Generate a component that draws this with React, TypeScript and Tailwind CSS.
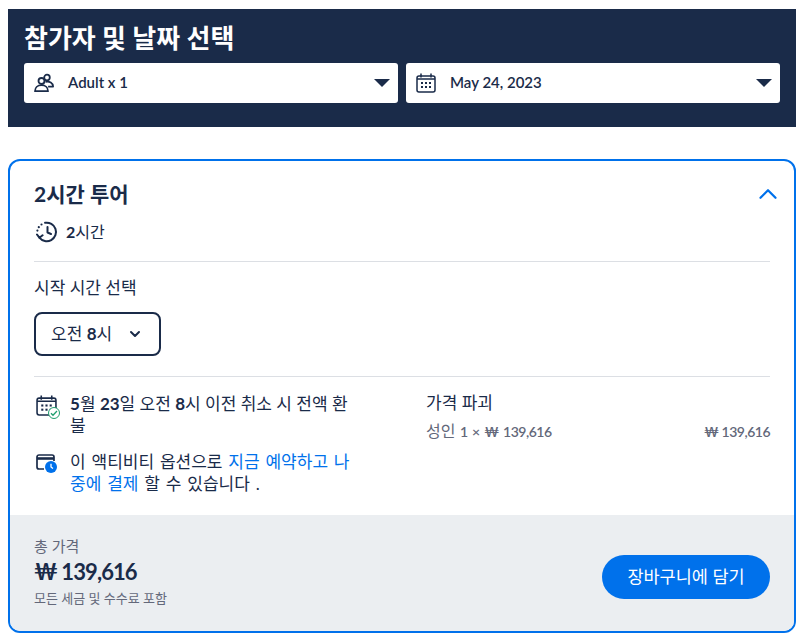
import { ChevronDown, ChevronUp } from "lucide-react";

const fontStack = "font-['Lato','Noto_Sans_CJK_KR',sans-serif]";

function PeopleIcon() {
  return (
    <svg width="20" height="20" viewBox="0 0 20 20" fill="none" stroke="#1a2b49" strokeWidth="1.8">
      <circle cx="7.5" cy="8" r="3" />
      <circle cx="13" cy="4.5" r="2.8" />
      <path d="M1 18.2c0-3.6 2.6-6 6.5-6s6.5 2.4 6.5 6z" strokeLinejoin="round" />
      <path d="M11.5 8.8c4-.8 7.6 1 7.6 4.8h-5" strokeLinejoin="round" />
    </svg>
  );
}

function CalendarIcon({ size = 20 }: { size?: number }) {
  return (
    <svg width={size} height={size} viewBox="0 0 20 20" fill="none" stroke="#1a2b49" strokeWidth="1.5">
      <rect x="1" y="3" width="18" height="16" rx="2" />
      <path d="M5 .5v4M15 .5v4M1 6h18" />
      <g fill="#1a2b49" stroke="none">
        <rect x="5" y="9" width="2" height="2" />
        <rect x="9" y="9" width="2" height="2" />
        <rect x="13" y="9" width="2" height="2" />
        <rect x="5" y="13" width="2" height="2" />
        <rect x="9" y="13" width="2" height="2" />
        <rect x="13" y="13" width="2" height="2" />
      </g>
    </svg>
  );
}

function HistoryIcon() {
  return (
    <svg width="22" height="22" viewBox="0 0 22 22" fill="none" stroke="#1a2b49" strokeWidth="2" strokeLinecap="round" strokeLinejoin="round">
      <path d="M9 1.8a9.3 9.3 0 1 1-5.6 14.9" />
      <path d="M1 13.5l2.4 3.2 3.2-2.4" />
      <path d="M11.5 6v5.5l3.5 1.5" />
      <path d="M5.5 3.5h.01M2.8 6.2h.01M1.4 9.6h.01" strokeWidth="2.2" />
    </svg>
  );
}

function CancelIcon() {
  return (
    <span className="relative block h-[24px] w-[24px]">
      <CalendarIcon size={21} />
      <span className="absolute right-0 bottom-0 flex h-[12px] w-[12px] items-center justify-center rounded-full border border-[#1f9e6e] bg-white">
        <svg width="8" height="8" viewBox="0 0 8 8" fill="none" stroke="#1f9e6e" strokeWidth="1.3">
          <path d="M1 4.2l2 2 4-4.2" />
        </svg>
      </span>
    </span>
  );
}

function PayLaterIcon() {
  return (
    <svg width="22" height="20" viewBox="0 0 22 20" fill="none">
      <path d="M8 15H3a2 2 0 0 1-2-2V3a2 2 0 0 1 2-2h13a2 2 0 0 1 2 2v4" stroke="#1a2b49" strokeWidth="1.7" />
      <path d="M1 4.5h17" stroke="#1a2b49" strokeWidth="2.6" />
      <circle cx="15" cy="13" r="6" fill="#0071eb" />
      <path d="M15 9.8V13l2 1.6" stroke="#fff" strokeWidth="1.3" />
    </svg>
  );
}

function Picker({ icon, label }: { icon: React.ReactNode; label: string }) {
  return (
    <div className="flex h-[40px] flex-1 items-center rounded-[3px] bg-white pr-[8px] pl-[10px]">
      <span className="flex w-[34px] shrink-0 items-center">{icon}</span>
      <span className="-mt-[2px] flex-1 text-[15px] font-semibold text-[#1a2b49]">{label}</span>
      <span className="h-0 w-0 border-x-[8px] border-t-[8px] border-x-transparent border-t-[#1a2b49]" />
    </div>
  );
}

export default function App() {
  return (
    <div className={`${fontStack} min-h-screen bg-white pt-[9px] pr-[5px] pl-2 text-[#1a2b49]`}>
      <section className="h-[118px] bg-[#1a2b49] px-4 pt-[12px]">
        <h2 className="text-[26px] leading-[34px] font-bold text-white">참가자 및 날짜 선택</h2>
        <div className="mt-[8px] flex gap-2">
          <Picker icon={<PeopleIcon />} label="Adult x 1" />
          <Picker icon={<CalendarIcon />} label="May 24, 2023" />
        </div>
      </section>

      <section className="mt-[32px] h-[474px] overflow-hidden rounded-[12px] border-2 border-[#0071eb]">
        <div className="h-[354px] px-[24px]">
          <div className="flex items-center justify-between pt-[18px]">
            <h3 className="text-[21px] leading-[28px] font-bold">2시간 투어</h3>
            <ChevronUp size={30} strokeWidth={1.8} className="-mr-[13px] text-[#0071eb]" />
          </div>
          <div className="mt-[11px] flex items-center gap-[8px] border-b border-[#dcdfe4] pb-[17px] pl-[2px]">
            <HistoryIcon />
            <span className="text-[16px] leading-[24px]"><b className="font-bold">2</b>시간</span>
          </div>
          <p className="mt-[14px] text-[17px] leading-[24px]">시작 시간 선택</p>
          <button
            type="button"
            className="mt-[12px] flex h-[44px] w-[127px] items-center rounded-[8px] border-2 border-[#1a2b49] pl-[15px] text-[17px]"
          >
            <span>오전 <b className="font-bold">8</b>시</span>
            <ChevronDown size={16} strokeWidth={3} className="ml-[15px]" />
          </button>
          <div className="mt-[20px] grid grid-cols-[392px_1fr] border-t border-[#dcdfe4] pt-[16px]">
            <div className="w-[318px] space-y-[14px] pl-[2px]">
              <div className="flex gap-[10px]">
                <span className="mt-[2px] shrink-0"><CancelIcon /></span>
                <p className="text-[17px] leading-[22px] break-all">
                  <b className="font-bold">5</b>월 <b className="font-bold">23</b>일 오전 <b className="font-bold">8</b>시 이전 취소 시 전액 환불
                </p>
              </div>
              <div className="flex gap-[10px]">
                <span className="mt-[3px] w-[24px] shrink-0"><PayLaterIcon /></span>
                <p className="text-[17px] leading-[22px] [word-spacing:1.5px] break-all">
                  이 액티비티 옵션으로 <span className="text-[#0071eb]">지금 예약하고 나중에 결제</span> 할 수 있습니다 .
                </p>
              </div>
            </div>
            <div className="-mt-[1px]">
              <p className="text-[17px] leading-[22px]">가격 파괴</p>
              <div className="mt-[6px] flex items-baseline justify-between text-[14px] leading-[22px] font-semibold tracking-[-0.5px] text-[#63687a]">
                <span className="[word-spacing:1.5px]"><span className="text-[16px] font-normal tracking-normal">성인</span> 1 × ₩ 139,616</span>
                <span>₩ 139,616</span>
              </div>
            </div>
          </div>
        </div>
        <div className="flex h-[116px] items-start justify-between bg-[#ebeef1] px-[24px]">
          <div className="pt-[21px]">
            <p className="text-[15px] leading-[20px] text-[#63687a]">총 가격</p>
            <p className="mt-[1px] text-[22px] leading-[30px] font-bold tracking-[-0.9px]">₩ 139,616</p>
            <p className="mt-[2px] text-[13px] leading-[18px] text-[#63687a]">모든 세금 및 수수료 포함</p>
          </div>
          <button type="button" className="mt-[40px] h-[44px] w-[168px] rounded-full bg-[#0071eb] text-[17.5px] text-white">
            장바구니에 담기
          </button>
        </div>
      </section>
    </div>
  );
}
